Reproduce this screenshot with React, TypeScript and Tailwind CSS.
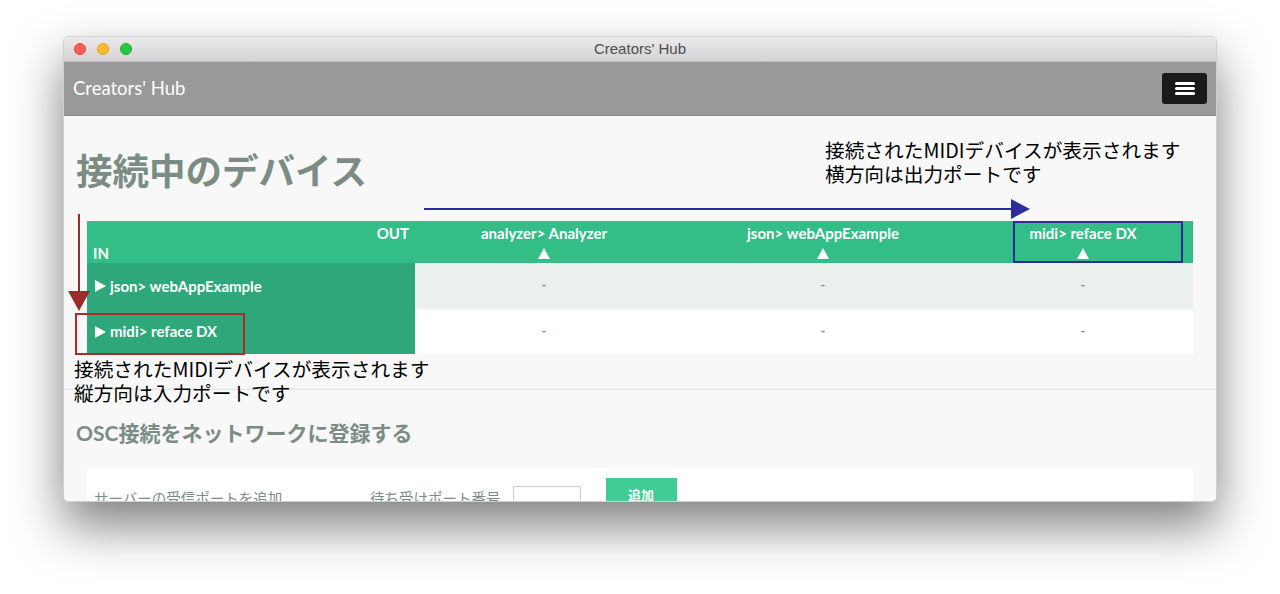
import React from "react";

const cjk = { fontFamily: "Lato, 'Noto Sans CJK JP', sans-serif" };

const columns = [
  { name: "analyzer> Analyzer", w: "w-[258px]" },
  { name: "json> webAppExample", w: "w-[300px]" },
  { name: "midi> reface DX", w: "w-[220px]" },
];

const inputs = ["json> webAppExample", "midi> reface DX"];

function Up() {
  return (
    <svg width="12" height="11" viewBox="0 0 12 11" className="mx-auto">
      <path d="M6 0 L12 11 L0 11 Z" fill="white" />
    </svg>
  );
}

function Right() {
  return (
    <svg width="11" height="12" viewBox="0 0 11 12" className="shrink-0">
      <path d="M0 0 L11 6 L0 12 Z" fill="white" />
    </svg>
  );
}

export default function App() {
  return (
    <div className="w-[1280px] h-[594px] bg-white pt-[36px] pl-[63px]" style={cjk}>
      <div className="relative w-[1154px] h-[466px] rounded-[5px] overflow-hidden bg-[#f8f8f8] shadow-[0_24px_50px_rgba(0,0,0,0.5)] border border-[#d0d0d0]">
        {/* title bar */}
        <div className="h-[25px] bg-gradient-to-b from-[#ebe9eb] to-[#d5d3d5] border-b border-[#bdbdbd] flex items-center relative">
          <div className="flex gap-[11px] pl-[10px]">
            <span className="w-[12px] h-[12px] rounded-full bg-[#fd5f57] border border-[#e2463f]" />
            <span className="w-[12px] h-[12px] rounded-full bg-[#fdbc2e] border border-[#e0a028]" />
            <span className="w-[12px] h-[12px] rounded-full bg-[#28c840] border border-[#1dac2c]" />
          </div>
          <div className="absolute inset-0 flex items-center justify-center text-[15px] text-[#4d4d4d]" style={{ fontFamily: "'Liberation Sans', sans-serif" }}>
            Creators' Hub
          </div>
        </div>

        {/* navbar */}
        <div className="h-[54px] bg-[#999999] flex items-center justify-between pl-[9px] pr-[9px] border-b border-[#8e8e8e]">
          <span className="text-white text-[18.5px]">Creators' Hub</span>
          <button className="w-[45px] h-[31px] bg-[#1a1a1a] rounded-[3px] flex flex-col items-center justify-center gap-[2px]">
            <span className="block w-[20px] h-[3px] bg-white rounded" />
            <span className="block w-[20px] h-[3px] bg-white rounded" />
            <span className="block w-[20px] h-[3px] bg-white rounded" />
          </button>
        </div>

        {/* section 1 */}
        <div className="pt-[33px] pb-[35px]">
          <h1 className="pl-[12px] text-[36.5px] leading-[44px] font-bold text-[#7b8c84]">接続中のデバイス</h1>
          <div className="mt-[28px] mx-[23px] flex flex-col text-[15px] font-bold">
            <div className="flex h-[42px] bg-[#33bd87] text-white border-t border-[#2fc28a]">
              <div className="w-[328px] flex flex-col leading-[20px] px-[6px] pt-[1px]">
                <span className="text-right">OUT</span>
                <span className="text-left">IN</span>
              </div>
              {columns.map((c) => (
                <div key={c.name} className={`${c.w} flex flex-col items-center leading-[20px] pt-[1px]`}>
                  <span>{c.name}</span>
                  <span className="h-[20px] flex items-center"><Up /></span>
                </div>
              ))}
            </div>
            {inputs.map((name, i) => (
              <div key={name} className={`flex ${i === 0 ? "h-[46px] bg-[#ecf0ed]" : "h-[45px] bg-white"}`}>
                <div className="w-[328px] bg-[#2ea87a] text-white flex items-center gap-[4px] pl-[8px]">
                  <Right />
                  <span>{name}</span>
                </div>
                {columns.map((c) => (
                  <div key={c.name} className={`${c.w} flex items-center justify-center text-[#7f8e87] font-bold text-[13px]`}>
                    -
                  </div>
                ))}
              </div>
            ))}
          </div>
        </div>

        {/* section 2 */}
        <div className="border-t border-[#e4e4e4] shadow-[0_-1px_2px_rgba(0,0,0,0.03)] pt-[29px]">
          <h2 className="pl-[12px] text-[21px] leading-[28px] font-bold text-[#7b8c84]">OSC接続をネットワークに登録する</h2>
          <div className="mt-[21px] mx-[23px] bg-white h-[80px] pt-[10px] flex items-start text-[14.5px] text-[#7b8c84]">
            <span className="w-[283px] pl-[7px] pt-[10px]">サーバーの受信ポートを追加</span>
            <span className="pt-[10px]">待ち受けポート番号</span>
            <span className="ml-[12px] mt-[8px] w-[68px] h-[30px] border border-[#cccccc] bg-white" />
            <button className="ml-[25px] w-[71px] h-[36px] bg-[#40cc94] text-white text-[13px] font-bold">追加</button>
          </div>
        </div>

        {/* annotations */}
        <svg className="absolute inset-0 pointer-events-none" width="1154" height="466">
          <line x1="360" y1="172" x2="950" y2="172" stroke="#2c2c9c" strokeWidth="2" />
          <path d="M947 162 L966 172 L947 182 Z" fill="#2c2c9c" />
          <rect x="950" y="185" width="168" height="40" fill="none" stroke="#2c2c9c" strokeWidth="2" />
          <line x1="15" y1="177" x2="15" y2="258" stroke="#9c2a2a" strokeWidth="2" />
          <path d="M4 254 L26 254 L15 274 Z" fill="#9c2a2a" />
          <rect x="12" y="277" width="168" height="40" fill="none" stroke="#b02a2a" strokeWidth="2" />
        </svg>
        <div className="absolute left-[761px] top-[101px] text-[19.7px] leading-[24px] text-black" style={{ fontFamily: "'Noto Sans CJK JP', sans-serif" }}>
          <div>接続されたMIDIデバイスが表示されます</div>
          <div>横方向は出力ポートです</div>
        </div>
        <div className="absolute left-[10px] top-[320px] text-[19.7px] leading-[24px] text-black" style={{ fontFamily: "'Noto Sans CJK JP', sans-serif" }}>
          <div>接続されたMIDIデバイスが表示されます</div>
          <div>縦方向は入力ポートです</div>
        </div>
      </div>
    </div>
  );
}
